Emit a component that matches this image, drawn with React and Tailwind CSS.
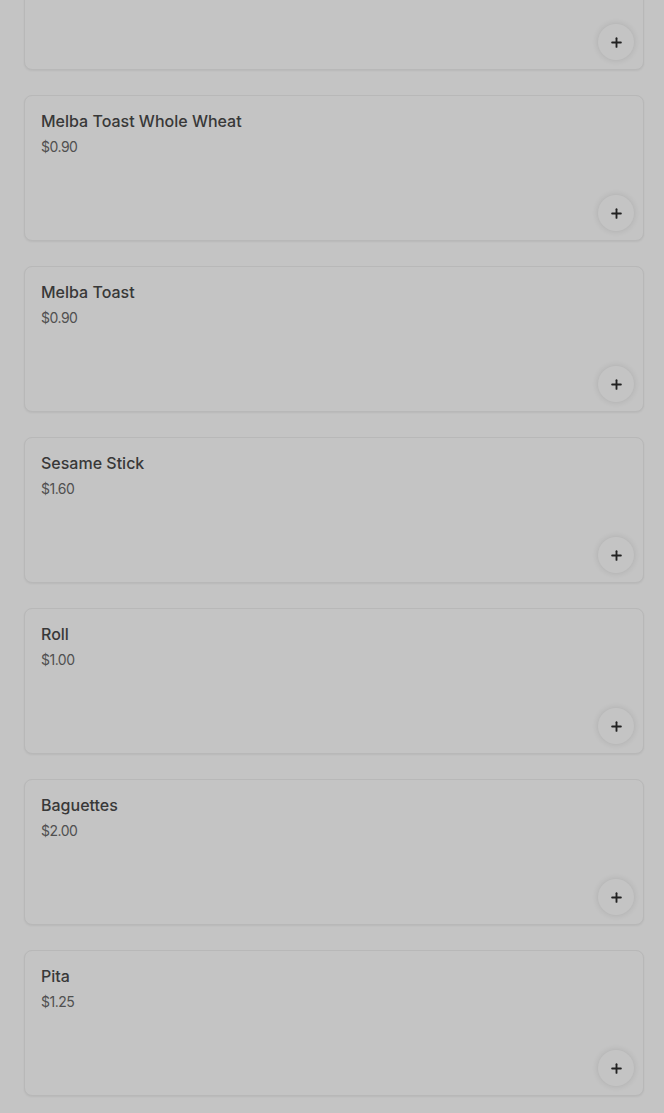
import { Plus } from "lucide-react";

const items = [
  { name: "Melba Toast Whole Wheat (prev)", price: "$0.90", hidden: true },
  { name: "Melba Toast Whole Wheat", price: "$0.90" },
  { name: "Melba Toast", price: "$0.90" },
  { name: "Sesame Stick", price: "$1.60" },
  { name: "Roll", price: "$1.00" },
  { name: "Baguettes", price: "$2.00" },
  { name: "Pita", price: "$1.25" },
];

function ItemCard({ item }) {
  return (
    <div className="relative h-[146px] rounded-lg border border-[#b8b8b8] bg-[#c4c4c4] px-4 pt-[14px] shadow-[0_1px_2px_rgba(0,0,0,0.06)]">
      {!item.hidden && (
        <>
          <h3 className="text-[16px] font-medium leading-[22px] text-[#383838]">{item.name}</h3>
          <p className="mt-[6px] text-[14px] leading-[18px] text-[#505050] tracking-[-0.5px]">{item.price}</p>
        </>
      )}
      <button className="absolute bottom-[9px] right-[9px] flex h-9 w-9 items-center justify-center rounded-full bg-[#c4c4c4] shadow-[0_0_6px_rgba(0,0,0,0.12)]">
        <Plus size={15} strokeWidth={3} className="text-[#222]" />
      </button>
    </div>
  );
}

export default function App() {
  return (
    <div className="min-h-[1113px] overflow-hidden bg-[#c4c4c4] pl-6 pr-5" style={{ fontFamily: "Inter, 'Noto Sans', sans-serif" }}>
      <div className="-mt-[76px] flex flex-col gap-[25px] pb-6">
        {items.map((item, index) => (
          <ItemCard key={index} item={item} />
        ))}
      </div>
    </div>
  );
}
